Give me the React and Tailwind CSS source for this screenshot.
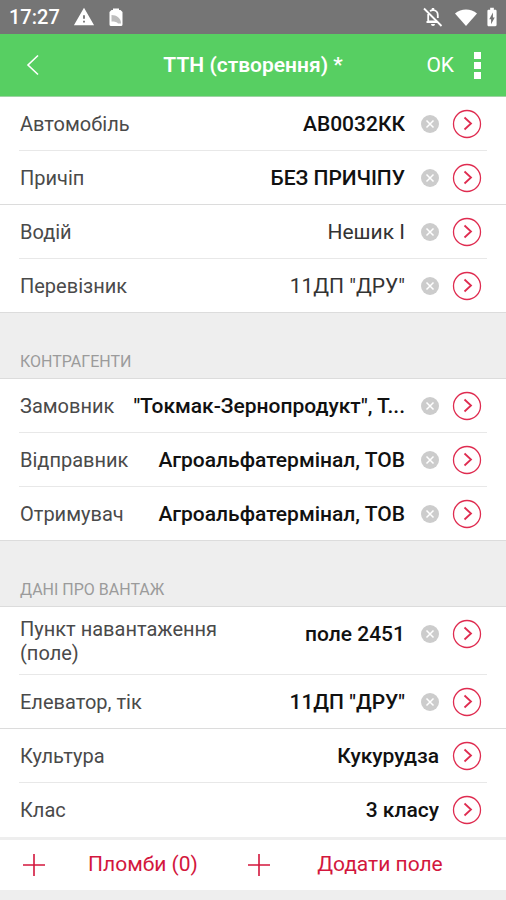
import { MdBatteryChargingFull, MdWarning } from 'react-icons/md';

const groups = [
  {
    id: 'transport',
    title: '',
    rows: [
      { label: 'Автомобіль', value: 'АВ0032КК', bold: true, clearable: true },
      { label: 'Причіп', value: 'БЕЗ ПРИЧІПУ', bold: true, clearable: true, full: true },
      { label: 'Водій', value: 'Нешик І', clearable: true },
      { label: 'Перевізник', value: '11ДП "ДРУ"', clearable: true, full: true },
    ],
  },
  {
    id: 'partners',
    title: 'КОНТРАГЕНТИ',
    rows: [
      {
        label: 'Замовник',
        value: '"Токмак-Зернопродукт", Т...',
        bold: true,
        clearable: true,
      },
      { label: 'Відправник', value: 'Агроальфатермінал, ТОВ', bold: true, clearable: true },
      { label: 'Отримувач', value: 'Агроальфатермінал, ТОВ', bold: true, clearable: true, full: true },
    ],
  },
  {
    id: 'cargo',
    title: 'ДАНІ ПРО ВАНТАЖ',
    rows: [
      {
        label: 'Пункт навантаження (поле)',
        value: 'поле 2451',
        bold: true,
        clearable: true,
        tall: true,
      },
      { label: 'Елеватор, тік', value: '11ДП "ДРУ"', bold: true, clearable: true, full: true },
      { label: 'Культура', value: 'Кукурудза', bold: true },
      { label: 'Клас', value: '3 класу', bold: true, last: true },
    ],
  },
];

function StatusBar() {
  return (
    <div className="flex h-[34px] items-center justify-between bg-[#757575] pr-[3px] pl-[9px] text-white">
      <div className="flex items-center">
        <span className="w-16 text-xl leading-6 font-medium">17:27</span>
        <MdWarning className="size-[22px]" />
        <svg viewBox="0 0 14 18" className="ml-[14px] h-[18px] w-[14px]">
          <path
            d="M4 2V0.5h6V2h1.5L13.500 4v12.500a1.500 1.500 0 0 1-1.500 1.500H2a1.500 1.500 0 0 1-1.500-1.500V4L2.500 2z"
            fill="#fff"
          />
          <path d="M2.500 7c5 0 9.500 3 9.500 8.500H9c-1-1.500-3-2-6.500-2z" fill="#bdbdbd" />
        </svg>
      </div>
      <div className="flex items-center">
        <svg viewBox="0 0 20 20" className="size-5" fill="none" stroke="#fff" strokeWidth="1.8">
          <path d="M7 4.200C8 3.400 9 3.200 10 3.200c3 0 4.800 2.200 4.800 5V11M5.200 7v7.500h9M3.500 15h12" />
          <path d="M10 3V1" strokeWidth="2.4" />
          <path d="M8 17h4a2 2 0 0 1-4 0z" fill="#fff" stroke="none" />
          <path d="m2.800 1.200 17 17" stroke="#757575" strokeWidth="1.6" />
          <path d="m1 1.500 17.500 17.500" />
        </svg>
        <svg viewBox="0 0 22 17" className="ml-3 h-[17px] w-[22px]">
          <path d="M0 4.500C6-1 16-1 22 4.500L11 17z" fill="#fff" />
        </svg>
        <MdBatteryChargingFull className="ml-1 size-[22px]" />
      </div>
    </div>
  );
}

function Header() {
  return (
    <header className="grid h-[63px] grid-cols-[1fr_auto_1fr] items-center border-b border-[#9ed3a4] bg-[#57cf62] text-white">
      <button type="button" aria-label="Назад" className="ml-[26px] w-4">
        <svg viewBox="0 0 14 22" className="h-[22px] w-[14px]">
          <path d="M12 1.500 2 11l10 9.500" fill="none" stroke="#fff" strokeWidth="1.6" />
        </svg>
      </button>
      <h1 className="text-[21px] leading-7 font-semibold">ТТН (створення) *</h1>
      <div className="flex items-center justify-end pr-[25px]">
        <button type="button" className="text-[21px] leading-7">
          OK
        </button>
        <button type="button" aria-label="Меню" className="ml-5 flex flex-col gap-[3px]">
          <span className="size-[7px] bg-white" />
          <span className="size-[7px] bg-white" />
          <span className="size-[7px] bg-white" />
        </button>
      </div>
    </header>
  );
}

function ClearIcon() {
  return (
    <svg viewBox="0 0 18 18" className="size-[18px]">
      <circle cx="9" cy="9" r="9" fill="#cccccc" />
      <path d="m5.500 5.500 7 7m0-7-7 7" stroke="#fff" strokeWidth="1.5" />
    </svg>
  );
}

function OpenIcon() {
  return (
    <svg viewBox="0 0 30 30" className="size-[30px]" fill="none" stroke="#df2c50">
      <circle cx="15" cy="15" r="13.5" strokeWidth="1.3" />
      <path d="m12.500 8.500 6.500 6-6.500 6" strokeWidth="1.8" />
    </svg>
  );
}

function Row({ row }) {
  return (
    <li className="relative">
      <div
        className={
          row.tall
            ? 'flex h-[68px] items-start pt-[10px] pr-6 pl-5'
            : 'flex h-[54px] items-center pr-6 pl-5'
        }
      >
        <span
          className={
            row.tall
              ? 'w-[230px] shrink-0 text-xl leading-6 text-[#4a4a4a]'
              : 'shrink-0 text-xl leading-6 text-[#4a4a4a]'
          }
        >
          {row.label}
        </span>
        <div className={row.tall ? 'flex min-w-0 flex-1 items-center pt-[2px]' : 'flex min-w-0 flex-1 items-center'}>
          <span
            className={
              row.bold
                ? 'ml-3 min-w-0 flex-1 truncate text-right text-[21px] leading-7 font-medium text-[#111111]'
                : 'ml-3 min-w-0 flex-1 truncate text-right text-[21px] leading-7 text-[#333333]'
            }
          >
            {row.value}
          </span>
          {row.clearable && (
            <button type="button" aria-label={`Очистити: ${row.label}`} className="ml-4">
              <ClearIcon />
            </button>
          )}
          <button type="button" aria-label={`Вибрати: ${row.label}`} className="ml-[13px]">
            <OpenIcon />
          </button>
        </div>
      </div>
      {!row.last && (
        <div
          className={
            row.full
              ? 'absolute inset-x-0 bottom-0 h-px bg-[#dcdcdc]'
              : 'absolute inset-x-[19px] bottom-0 h-px bg-[#e8e8e8]'
          }
        />
      )}
    </li>
  );
}

function AddButton({ children }) {
  return (
    <button type="button" className="flex h-[50px] items-center text-[21px] text-[#d3173d]">
      <svg viewBox="0 0 22 22" className="size-[22px] shrink-0" stroke="#d3173d" strokeWidth="1.6">
        <path d="M11 0v22M0 11h22" />
      </svg>
      <span className="flex-1 text-center">{children}</span>
    </button>
  );
}

export default function App() {
  return (
    <div className="min-h-screen bg-[#eeeeee] font-['Roboto',sans-serif]">
      <StatusBar />
      <Header />
      <main>
        {groups.map((group) => (
          <section key={group.id}>
            {group.title && (
              <h2 className="flex h-[66px] items-end border-b border-[#dcdcdc] px-5 pb-1 text-base text-[#9b9b9b]">
                {group.title}
              </h2>
            )}
            <ul className="bg-white">
              {group.rows.map((row) => (
                <Row key={row.label} row={row} />
              ))}
            </ul>
          </section>
        ))}
        <div className="mt-[3px] grid grid-cols-[9fr_10fr] gap-[7px] bg-white pr-4 pl-[23px]">
          <AddButton>Пломби (0)</AddButton>
          <AddButton>Додати поле</AddButton>
        </div>
      </main>
    </div>
  );
}
